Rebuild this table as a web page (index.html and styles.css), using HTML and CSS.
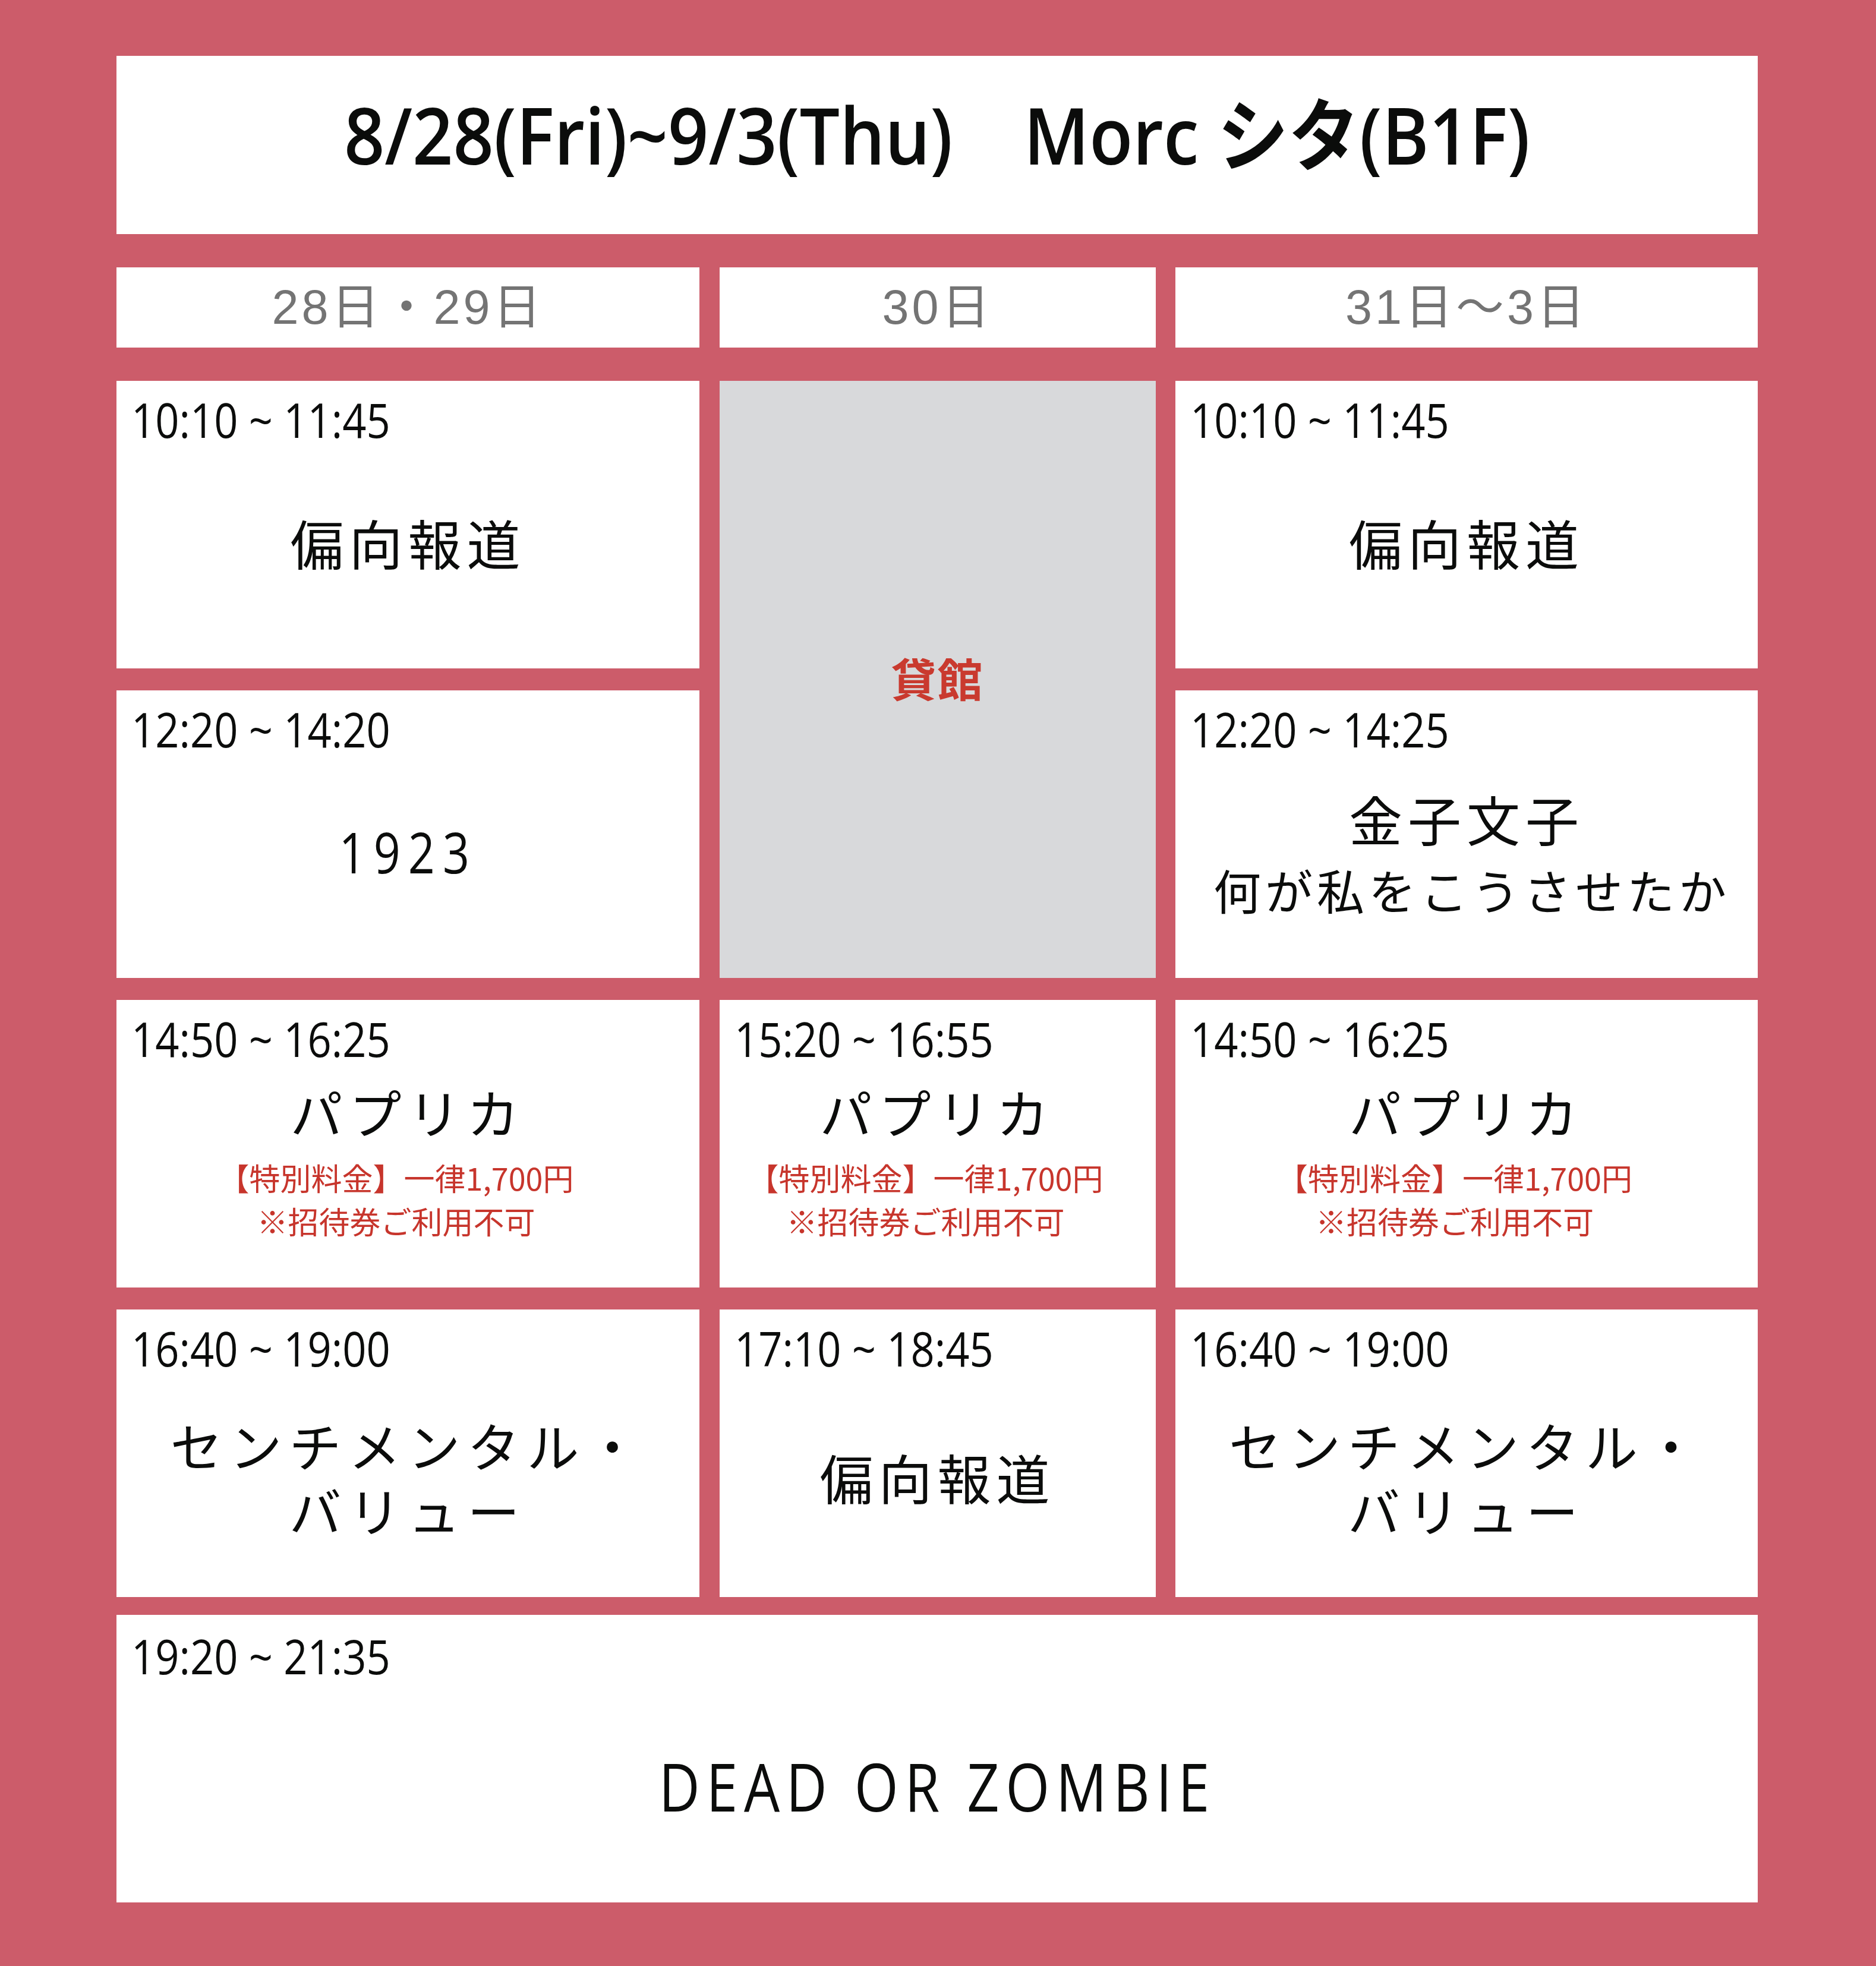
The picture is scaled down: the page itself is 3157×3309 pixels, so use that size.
FILE: index.html
```html
<!DOCTYPE html>
<html lang="ja">
<head>
<meta charset="utf-8">
<title>Morc シタ(B1F) 上映スケジュール</title>
<link rel="stylesheet" href="styles.css">
</head>
<body>
<div class="poster">
  <header class="title"><span class="title-text">8/28(Fri)~9/3(Thu)　Morc シタ(B1F)</span></header>

  <div class="days">
    <div class="day">28日・29日</div>
    <div class="day">30日</div>
    <div class="day">31日〜3日</div>
  </div>

  <div class="grid">
    <div class="cell">
      <div class="time"><span>10:10 ~ 11:45</span></div>
      <div class="body"><p class="film">偏向報道</p></div>
    </div>
    <div class="closed">貸館</div>
    <div class="cell">
      <div class="time"><span>10:10 ~ 11:45</span></div>
      <div class="body"><p class="film">偏向報道</p></div>
    </div>

    <div class="cell">
      <div class="time"><span>12:20 ~ 14:20</span></div>
      <div class="body"><p class="film latin"><span>1923</span></p></div>
    </div>
    <div class="cell">
      <div class="time"><span>12:20 ~ 14:25</span></div>
      <div class="body">
        <p class="film">金子文子</p>
        <p class="film sub">何が私をこうさせたか</p>
      </div>
    </div>

    <div class="cell">
      <div class="time"><span>14:50 ~ 16:25</span></div>
      <div class="body">
        <p class="film kana">パプリカ</p>
        <div class="note"><p>【特別料金】一律1,700円</p><p>※招待券ご利用不可</p></div>
      </div>
    </div>
    <div class="cell">
      <div class="time"><span>15:20 ~ 16:55</span></div>
      <div class="body">
        <p class="film kana">パプリカ</p>
        <div class="note"><p>【特別料金】一律1,700円</p><p>※招待券ご利用不可</p></div>
      </div>
    </div>
    <div class="cell">
      <div class="time"><span>14:50 ~ 16:25</span></div>
      <div class="body">
        <p class="film kana">パプリカ</p>
        <div class="note"><p>【特別料金】一律1,700円</p><p>※招待券ご利用不可</p></div>
      </div>
    </div>

    <div class="cell">
      <div class="time"><span>16:40 ~ 19:00</span></div>
      <div class="body low">
        <p class="film kana two">センチメンタル・<br>バリュー</p>
      </div>
    </div>
    <div class="cell">
      <div class="time"><span>17:10 ~ 18:45</span></div>
      <div class="body low"><p class="film">偏向報道</p></div>
    </div>
    <div class="cell">
      <div class="time"><span>16:40 ~ 19:00</span></div>
      <div class="body low">
        <p class="film kana two">センチメンタル・<br>バリュー</p>
      </div>
    </div>
  </div>

  <div class="cell wide">
    <div class="time late"><span>19:20 ~ 21:35</span></div>
    <div class="body lowest"><p class="film big"><span>DEAD OR ZOMBIE</span></p></div>
  </div>
</div>
</body>
</html>
```

FILE: styles.css
```css
html, body {
  margin: 0;
  padding: 0;
}

body {
  background: #cc5c6a;
  color: #0b0c0b;
  font-family: "Open Sans", "Noto Sans CJK JP", sans-serif;
}

.poster {
  width: 3157px;
  height: 3309px;
  box-sizing: border-box;
  padding: 94px 199px 107px 196px;
  display: flex;
  flex-direction: column;
}

/* ---------- title bar ---------- */
.title {
  height: 300px;
  box-sizing: border-box;
  padding-bottom: 37px;
  background: #fff;
  display: flex;
  align-items: center;
  justify-content: center;
}

.title-text {
  display: inline-block;
  font-family: "Open Sans", "Noto Sans CJK JP", sans-serif;
  font-weight: 600;
  font-size: 133px;
  line-height: 133px;
  white-space: nowrap;
  transform: scaleX(0.9);
  color: #0b0c0b;
}

/* ---------- day headers ---------- */
.days {
  margin-top: 56px;
  height: 135px;
  display: grid;
  grid-template-columns: 981px 734px 980px;
  column-gap: 33.5px;
}

.day {
  background: #fff;
  display: flex;
  align-items: center;
  justify-content: center;
  font-family: "Liberation Sans", "Noto Sans CJK JP", sans-serif;
  font-size: 81px;
  line-height: 81px;
  letter-spacing: 5px;
  color: #747474;
}

/* ---------- schedule grid ---------- */
.grid {
  margin-top: 56px;
  display: grid;
  grid-template-columns: 981px 734px 980px;
  grid-template-rows: repeat(4, 484px);
  column-gap: 33.5px;
  row-gap: 37px;
}

.cell {
  background: #fff;
  display: flex;
  flex-direction: column;
  min-width: 0;
}

.closed {
  grid-row: span 2;
  background: #d8d9db;
  display: flex;
  align-items: center;
  justify-content: center;
  padding-bottom: 6px;
  font-family: "Noto Sans CJK JP", sans-serif;
  font-weight: 700;
  font-size: 76px;
  line-height: 1.2;
  letter-spacing: 2px;
  color: #c93a2f;
}

.time {
  height: 80px;
  padding: 25px 0 0 25px;
  font-family: "Open Sans", sans-serif;
  font-size: 80px;
  line-height: 80px;
  white-space: nowrap;
  color: #0b0c0b;
}

.time span {
  display: inline-block;
  transform: scaleX(0.88);
  transform-origin: left center;
}

.time.late {
  padding-top: 29px;
}

.body {
  flex: 1;
  display: flex;
  flex-direction: column;
  align-items: center;
  justify-content: center;
  padding-bottom: 47px;
  text-align: center;
}

.body.low {
  padding-bottom: 27px;
}

.body.lowest {
  padding-bottom: 17px;
}

.film {
  margin: 0;
  font-family: "Noto Sans CJK JP", sans-serif;
  font-weight: 400;
  font-size: 90px;
  line-height: 126px;
  letter-spacing: 9px;
  white-space: nowrap;
  color: #0b0c0b;
}

.film.sub {
  font-size: 80px;
  line-height: 112px;
  letter-spacing: 7px;
  padding-left: 18px;
}

.film.kana {
  font-size: 88px;
  line-height: 106px;
  letter-spacing: 11px;
}

.film.kana.two {
  line-height: 109px;
  letter-spacing: 12px;
}

.film.latin {
  font-family: "Open Sans", sans-serif;
  font-weight: 400;
  font-size: 96px;
  line-height: 120px;
}

.film.latin span {
  display: inline-block;
  letter-spacing: 16px;
  transform: scaleX(0.82);
}

.film.big {
  font-family: "Open Sans", sans-serif;
  font-size: 112px;
  line-height: 150px;
}

.film.big span {
  display: inline-block;
  letter-spacing: 12.5px;
  transform: scaleX(0.85);
}

.note {
  margin-top: 22px;
  padding-right: 40px;
  font-family: "Noto Sans CJK JP", sans-serif;
  font-size: 52px;
  line-height: 73px;
  color: #c7352c;
  white-space: nowrap;
}

.note p {
  margin: 0;
}

.wide {
  margin-top: 30px;
  height: 484px;
}
```
